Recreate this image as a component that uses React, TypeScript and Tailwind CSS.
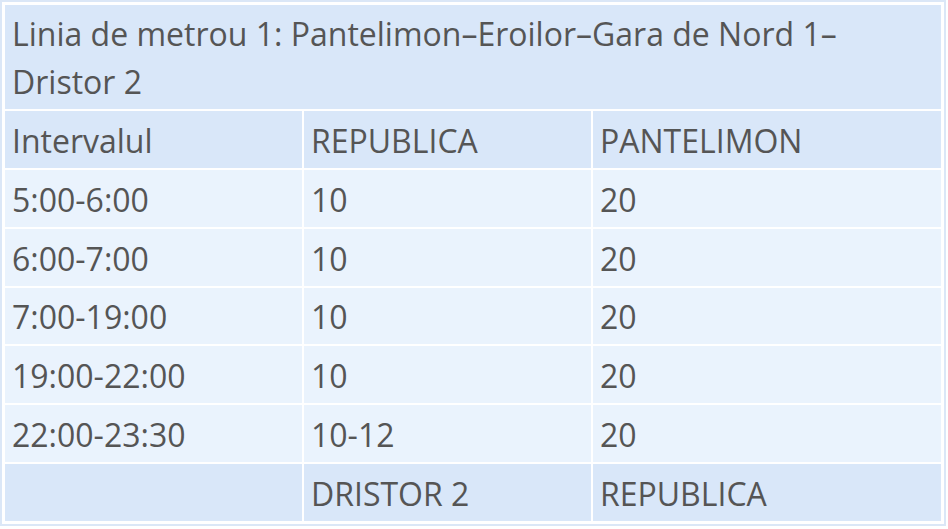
export default function App() {
  const rows = [
    ["5:00-6:00", "10", "20"],
    ["6:00-7:00", "10", "20"],
    ["7:00-19:00", "10", "20"],
    ["19:00-22:00", "10", "20"],
    ["22:00-23:30", "10-12", "20"],
  ];

  const cell = "px-[7px] pt-[3px] h-[56.85px] align-middle text-left font-normal";

  return (
    <div className="bg-white min-h-screen">
      <div
        className="w-[946px] border-2 border-[#dbe7f7] bg-white p-[1px] text-[32px] leading-[48px] text-[#555]"
        style={{ fontFamily: '"Open Sans", "Noto Sans", sans-serif' }}
      >
        <table className="w-full border-separate border-spacing-[2px] table-fixed">
          <colgroup>
            <col className="w-[297px]" />
            <col className="w-[287px]" />
            <col />
          </colgroup>
          <thead>
            <tr>
              <th colSpan={3} className="bg-[#d9e7f9] px-[7px] pt-[5px] pb-[3px] text-left font-normal">
                Linia de metrou 1: Pantelimon–Eroilor–Gara de Nord 1–Dristor 2
              </th>
            </tr>
            <tr className="bg-[#d9e7f9]">
              <th className={cell}>Intervalul</th>
              <th className={cell}>REPUBLICA</th>
              <th className={cell}>PANTELIMON</th>
            </tr>
          </thead>
          <tbody>
            {rows.map((r) => (
              <tr key={r[0]} className="bg-[#eaf3fd]">
                <td className={cell}>{r[0]}</td>
                <td className={cell}>{r[1]}</td>
                <td className={cell}>{r[2]}</td>
              </tr>
            ))}
            <tr className="bg-[#d9e7f9]">
              <td className={cell}></td>
              <td className={cell}>DRISTOR 2</td>
              <td className={cell}>REPUBLICA</td>
            </tr>
          </tbody>
        </table>
      </div>
    </div>
  );
}
